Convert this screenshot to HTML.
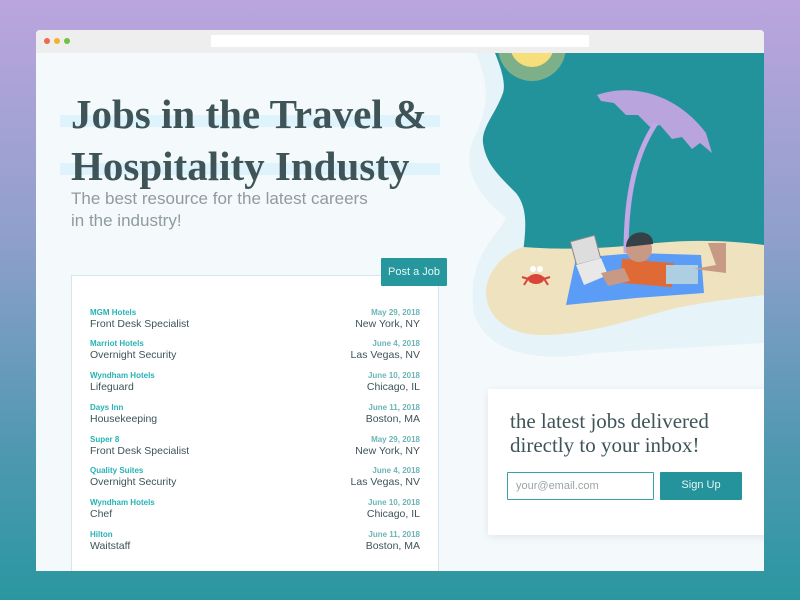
<!DOCTYPE html>
<html><head><meta charset="utf-8"><style>
*{margin:0;padding:0;box-sizing:border-box}
body{width:800px;height:600px;overflow:hidden;background:linear-gradient(180deg,#bba5de 0%,#8f9fcc 40%,#4f98b0 75%,#2a97a0 100%);position:relative;font-family:"Liberation Sans",sans-serif}
.win{position:absolute;left:36px;top:30px;width:728px;height:541px;background:#f4f9fc;overflow:hidden;border-radius:4px 4px 0 0}
.bar{position:absolute;left:0;top:0;width:728px;height:23px;background:#eeeeee}
.dot{position:absolute;top:8px;width:6px;height:6px;border-radius:50%}
.addr{position:absolute;left:175px;top:5px;width:378px;height:12px;background:#fff}
h1{position:absolute;left:35px;top:58px;font-family:"Liberation Serif",serif;font-weight:bold;font-size:41px;line-height:52px;color:#3e5457;z-index:2;white-space:nowrap}
.hl{position:absolute;left:24px;width:380px;height:12px;background:#dff3fd}
.sub{position:absolute;left:35px;top:158px;font-size:17px;line-height:22px;color:#8f9b9d}
.card{position:absolute;left:35px;top:245px;width:368px;height:310px;background:#fff;border:1px solid #d6e6ec}
.post{position:absolute;left:345px;top:228px;width:66px;height:28px;background:#25979d;color:#e9f6f6;font-size:11px;line-height:28px;text-align:center;z-index:3;border-radius:1px}
.row{position:absolute;left:18px;width:330px;height:30px}
.co{position:absolute;left:0;top:0;font-size:8px;font-weight:bold;color:#27b2b5}
.ti{position:absolute;left:0;top:10px;font-size:10.5px;color:#3e5457}
.da{position:absolute;right:0;top:0;font-size:8px;font-weight:bold;color:#6bb5b8}
.lo{position:absolute;right:0;top:10px;font-size:10.5px;color:#3e5457}
.sign{position:absolute;left:452px;top:359px;width:290px;height:146px;background:#fff;box-shadow:0 2px 8px rgba(0,0,0,.08)}
.sign p{position:absolute;left:22px;top:20px;font-family:"Liberation Serif",serif;font-size:21px;line-height:24px;color:#3e5457}
.inp{position:absolute;left:19px;top:83px;width:147px;height:28px;border:1px solid #36a1aa;font-size:11px;color:#9aa5a7;line-height:26px;padding-left:8px;border-radius:1px}
.btn{position:absolute;left:172px;top:83px;width:82px;height:28px;background:#25939b;color:#e6f4f5;font-size:11px;line-height:26px;text-align:center;border-radius:1px}
</style></head><body>
<div class="win">
<div class="bar"><div class="dot" style="left:8px;background:#ee6a4e"></div><div class="dot" style="left:18px;background:#f2b230"></div><div class="dot" style="left:28px;background:#72c13e"></div><div class="addr"></div></div>
<svg style="position:absolute;left:0;top:23px" width="728" height="518">
<path d="M440 0 C452 30,455 50,438 85 C425 115,440 140,470 165 C460 185,430 205,438 260 C450 300,500 310,560 300 L728 290 L728 0 Z" fill="#e6f3f8"/>
<path d="M459 0 C465 15,470 30,467 40 C460 60,445 75,447 90 C450 110,460 120,480 140 C492 155,490 175,487 200 L487 225 L728 225 L728 0 Z" fill="#23939b"/>
<circle cx="496" cy="-6" r="34" fill="#c9c77a" opacity=".55"/>
<circle cx="496" cy="-8" r="22" fill="#f6de7a"/>
<path d="M487 194 C470 200,452 215,450 238 C450 268,478 284,512 282 C560 280,600 265,640 255 C680 247,705 245,728 242 L728 192 C700 188,660 186,620 190 C580 194,540 198,487 194 Z" fill="#efe2be"/>
<path d="M561 42 C595 30,640 40,670 80 L676 100 L664 90 L656 96 L646 84 L636 86 L624 72 L614 74 L602 62 L590 62 L578 50 L565 48 Z" fill="#b9a4dd"/>
<path d="M620 70 C600 100,590 140,590 200" stroke="#c0a8e6" stroke-width="5" fill="none"/>
<path d="M540 205 L600 200 L665 202 L668 240 L600 245 L530 252 Z" fill="#5b9cf7"/>
<rect x="537" y="185" width="25" height="24" fill="#ddd" stroke="#888" transform="rotate(-15 550 197)"/>
<path d="M540 212 L565 205 L572 222 L548 232 Z" fill="#e8e8e8"/>
<rect x="585" y="208" width="52" height="24" fill="#e06a36" transform="rotate(5 611 220)"/>
<rect x="630" y="212" width="32" height="19" fill="#aecfe2"/>
<path d="M658 216 L680 212 L672 190 L690 190 L690 220 Z" fill="#c89a86"/>
<circle cx="603" cy="196" r="13" fill="#c89a86"/>
<path d="M590 194 C590 175,618 175,617 191 Z" fill="#364147"/>
<path d="M565 220 L588 215 L594 228 L572 233 Z" fill="#c89a86"/>
<ellipse cx="500" cy="226" rx="8" ry="5" fill="#d9453a"/>
<path d="M488 232 L493 224 M512 232 L507 224 M486 224 L492 226 M514 224 L508 226" stroke="#d9453a" stroke-width="2"/>
<circle cx="497" cy="216" r="3" fill="#fff"/><circle cx="504" cy="216" r="3" fill="#fff"/>
</svg>
<div class="hl" style="top:85px"></div><div class="hl" style="top:133px"></div>
<h1>Jobs in the Travel &amp;<br>Hospitality Industy</h1>
<div class="sub">The best resource for the latest careers<br>in the industry!</div>
<div class="card">
<div class="row" style="top:32px"><span class="co">MGM Hotels</span><span class="ti">Front Desk Specialist</span><span class="da">May 29, 2018</span><span class="lo">New York, NY</span></div>
<div class="row" style="top:63px"><span class="co">Marriot Hotels</span><span class="ti">Overnight Security</span><span class="da">June 4, 2018</span><span class="lo">Las Vegas, NV</span></div>
<div class="row" style="top:95px"><span class="co">Wyndham Hotels</span><span class="ti">Lifeguard</span><span class="da">June 10, 2018</span><span class="lo">Chicago, IL</span></div>
<div class="row" style="top:127px"><span class="co">Days Inn</span><span class="ti">Housekeeping</span><span class="da">June 11, 2018</span><span class="lo">Boston, MA</span></div>
<div class="row" style="top:159px"><span class="co">Super 8</span><span class="ti">Front Desk Specialist</span><span class="da">May 29, 2018</span><span class="lo">New York, NY</span></div>
<div class="row" style="top:190px"><span class="co">Quality Suites</span><span class="ti">Overnight Security</span><span class="da">June 4, 2018</span><span class="lo">Las Vegas, NV</span></div>
<div class="row" style="top:222px"><span class="co">Wyndham Hotels</span><span class="ti">Chef</span><span class="da">June 10, 2018</span><span class="lo">Chicago, IL</span></div>
<div class="row" style="top:254px"><span class="co">Hilton</span><span class="ti">Waitstaff</span><span class="da">June 11, 2018</span><span class="lo">Boston, MA</span></div>
</div>
<div class="post">Post a Job</div>
<div class="sign"><p>the latest jobs delivered<br>directly to your inbox!</p><div class="inp">your@email.com</div><div class="btn">Sign Up</div></div>
</div>
</body></html>
